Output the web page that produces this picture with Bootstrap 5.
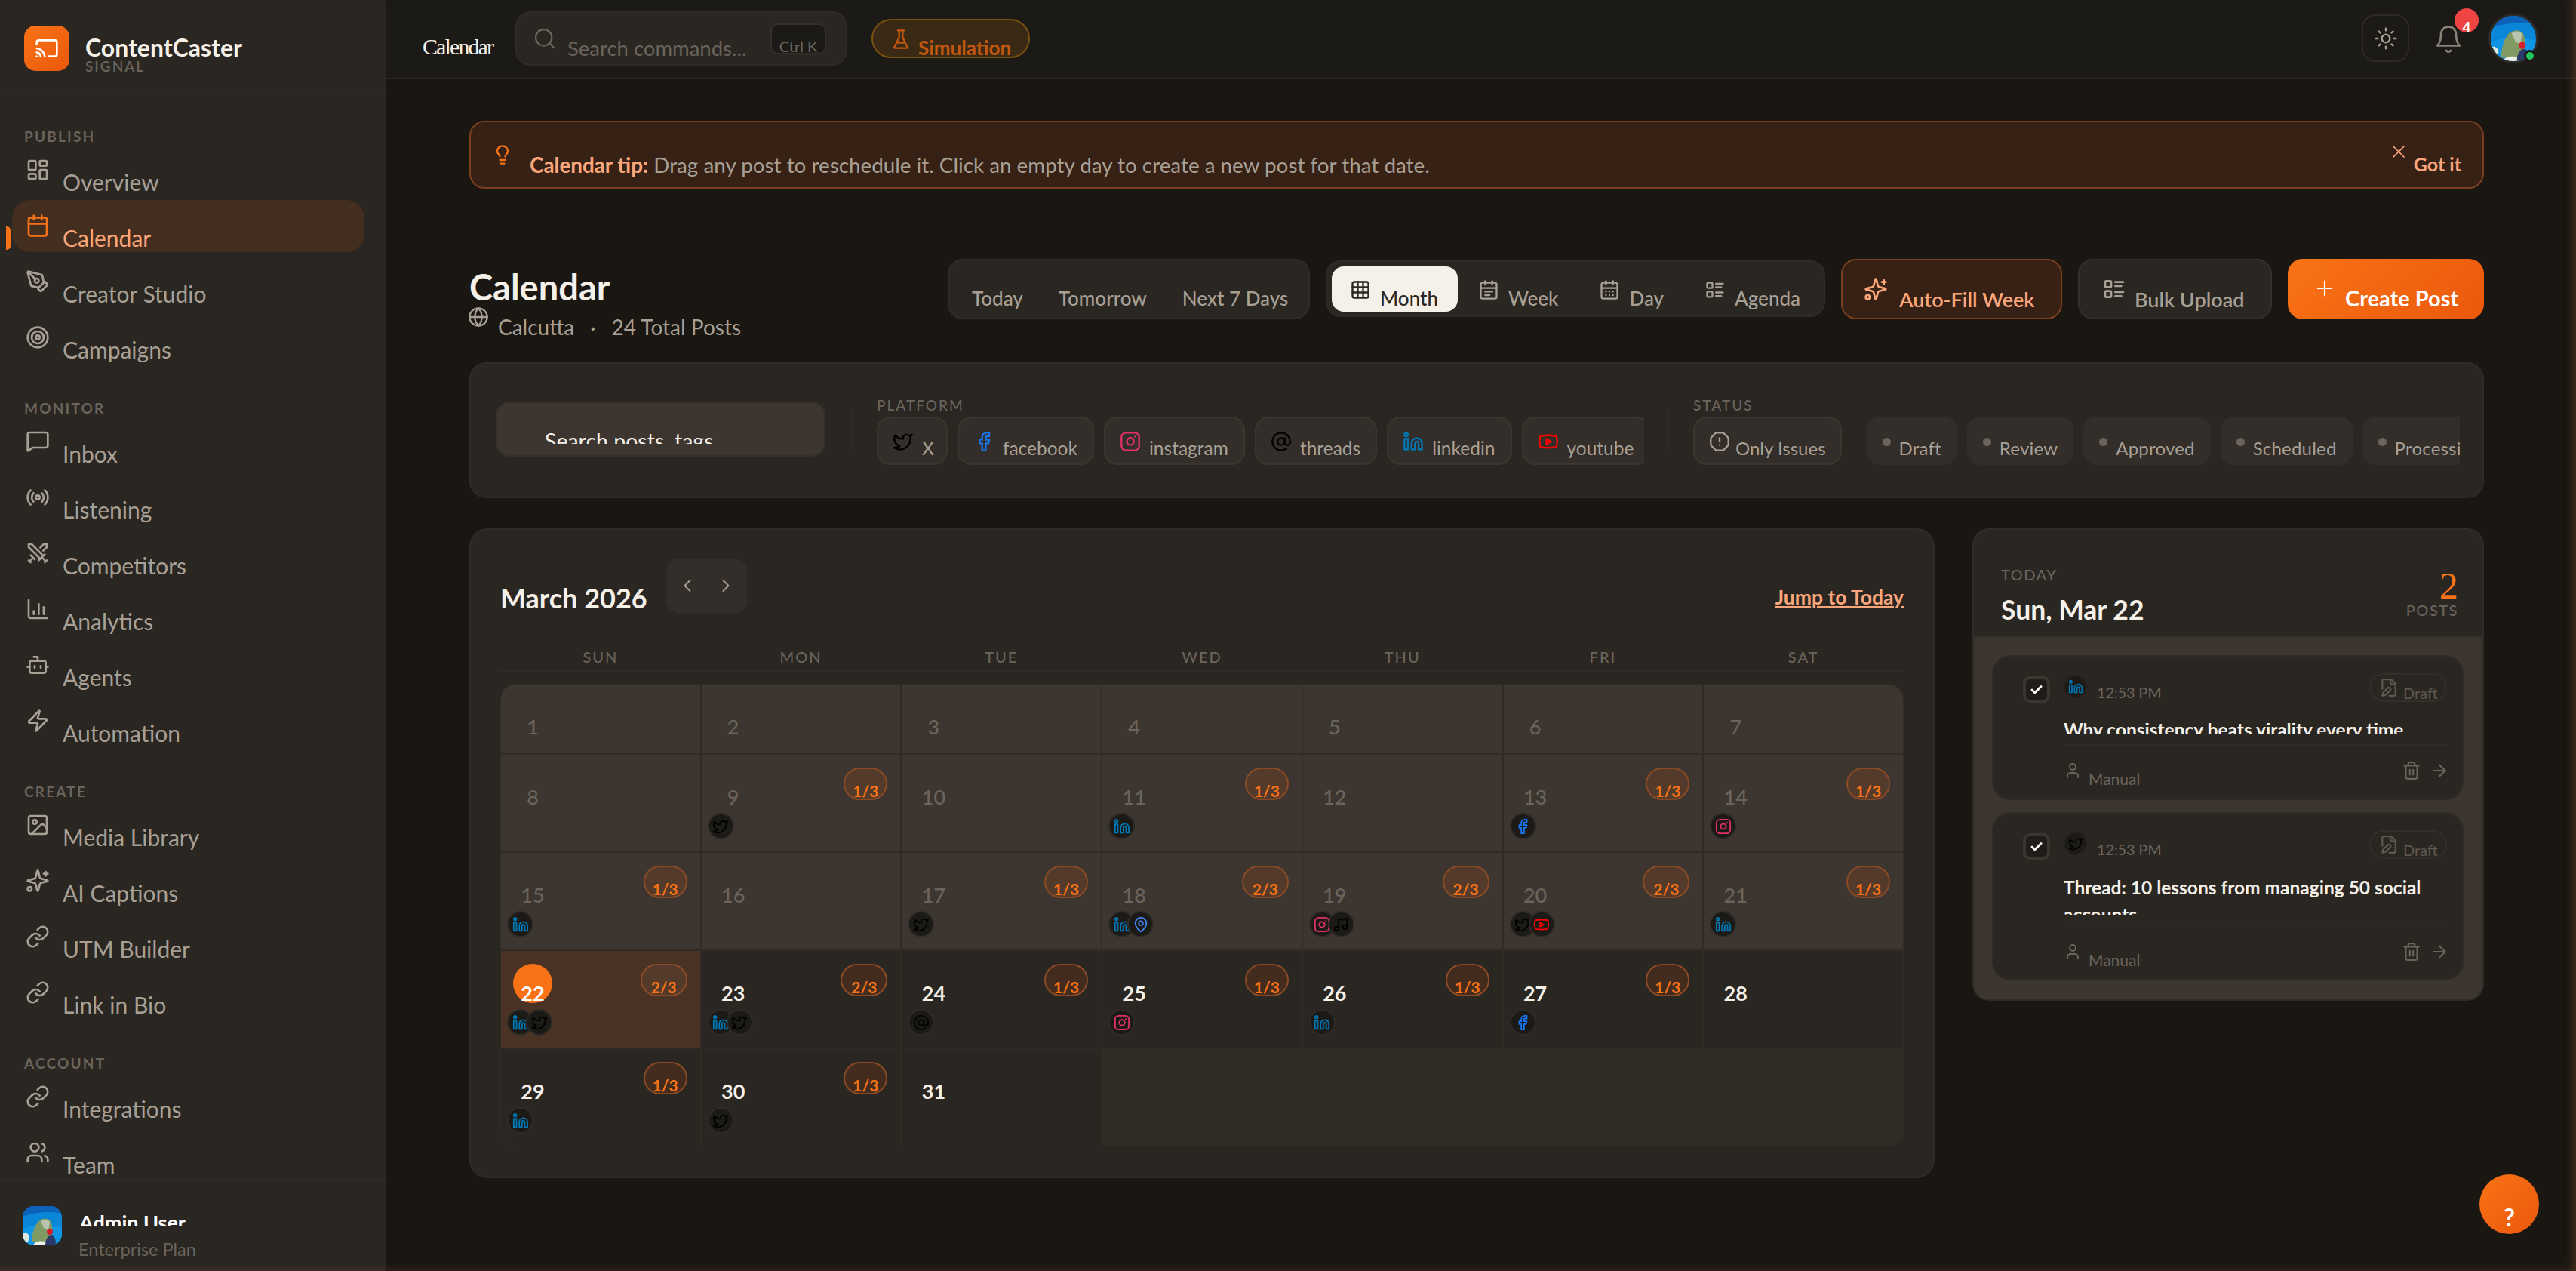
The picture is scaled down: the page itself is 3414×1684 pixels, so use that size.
<!DOCTYPE html>
<html lang="en">
<head>
<meta charset="UTF-8">
<title>ContentCaster - Calendar</title>
<link href="https://cdn.jsdelivr.net/npm/bootstrap@5.3.2/dist/css/bootstrap.min.css" rel="stylesheet">
<style>
  :root { --cc-bg:#1a1612; --cc-top:#1c1a17; --cc-panel:#2a2622; --cc-raise:#332e29; --cc-well:#3d3630; --cc-line:#35302b; --cc-bright:#f5f0e8; --cc-muted:#a8a095; --cc-dim:#6b645c; --cc-orange:#f97316; --cc-peach:#fda67a; --cc-tipbg:#372115; --cc-tipline:#7a3f1e; }
  html, body { height:100%; }
  body { margin:0; overflow:hidden; background:var(--cc-bg); color:var(--cc-bright); font-family:"Lato","Liberation Sans",sans-serif; font-size:26px; }
  body::after { content:""; position:fixed; inset:0; pointer-events:none; box-shadow:inset -10px -6px 14px -8px rgba(125,75,45,.55); }
  svg.ico { fill:none; stroke:currentColor; stroke-width:2; stroke-linecap:round; stroke-linejoin:round; flex:none; display:block; }
  .s18 { width:18px; height:18px; } .s20 { width:20px; height:20px; } .s22 { width:22px; height:22px; } .s24 { width:24px; height:24px; } .s26 { width:26px; height:26px; } .s28 { width:28px; height:28px; } .s32 { width:32px; height:32px; }
  .col-fill { min-width:0; }

  /* sidebar */
  .side-rail { width:512px; flex:none; background:var(--cc-panel); height:100vh; }
  .brand-head { height:124px; padding:34px 0 0 32px; border-bottom:1px solid #2f2b27; gap:21px; }
  .brand-logo { width:60px; height:60px; border-radius:15px; background:linear-gradient(135deg,#f97316,#ea580c); color:#fff; }
  .brand-name { font-size:32px; font-weight:700; line-height:36px; margin-top:11px; color:var(--cc-bright); }
  .brand-sub { font-size:19px; font-weight:600; line-height:20px; letter-spacing:2px; color:var(--cc-dim); margin-top:-3px; }
  .rail-scroll { overflow:hidden; flex:1 1 0; min-height:0; }
  .rail-label { height:21px; line-height:21px; font-size:19px; font-weight:700; letter-spacing:2.2px; color:var(--cc-dim); padding-left:32px; margin-top:48px; }
  .rail-scroll > .rail-label:first-child { margin-top:46px; }
  .rail-item { position:relative; display:flex; align-items:flex-start; height:69px; margin:0 0 5px 16px; width:467px; padding-left:18px; border-radius:24px; color:var(--cc-muted); text-decoration:none; }
  .rail-item svg { margin-top:18px; }
  .rail-item span { margin-left:17px; margin-top:32px; font-size:30px; line-height:36px; }
  .rail-item.is-on { background:#442e20; color:var(--cc-peach); }
  .rail-item.is-on svg { color:var(--cc-orange); }
  .rail-item.is-on::before { content:""; position:absolute; left:-8px; top:35px; width:6px; height:31px; background:var(--cc-orange); border-radius:0 5px 5px 0; }
  .rail-foot { height:122px; flex:none; border-top:1px solid #332e29; padding:35px 0 0 30px; gap:23px; }
  .foot-ava { width:52px; height:52px; border-radius:15px; overflow:hidden; flex:none; }
  .foot-name-clip { height:27px; overflow:hidden; }
  .foot-name { font-size:27px; font-weight:700; line-height:34px; margin-top:5px; color:#fff; }
  .foot-plan { font-size:23.5px; line-height:30px; margin-top:15px; margin-left:-1px; color:var(--cc-dim); }

  /* topbar */
  .top-strip { height:105px; flex:none; background:var(--cc-top); border-bottom:2px solid #2e2b27; padding:0 50px 0 48px; }
  .top-title { font-family:"Liberation Serif",serif; font-size:30px; letter-spacing:-1.9px; line-height:36px; margin-top:44px; width:91px; color:var(--cc-bright); white-space:nowrap; }
  .cmd-box { width:440px; height:72px; margin:15px 0 0 32px; padding-left:21px; background:var(--cc-panel); border:2px solid #2f2b27; border-radius:20px; }
  .cmd-box svg { margin-top:18px; color:var(--cc-dim); stroke-width:1.7; }
  .cmd-hint { margin:30px 0 0 14px; font-size:27.5px; line-height:34px; color:var(--cc-dim); white-space:nowrap; }
  .cmd-key { width:74px; height:41px; margin:14px 26px 0 auto; background:var(--cc-top); border:2px solid var(--cc-line); border-radius:10px; color:var(--cc-dim); font-size:20px; line-height:24px; text-align:center; padding-top:16px; overflow:hidden; white-space:nowrap; }
  .sim-pill { width:210px; height:52px; margin:25px 0 0 32px; padding-left:23px; background:#3a2a15; border:2px solid #7a5010; border-radius:26px; color:#c2570f; font-size:26px; font-weight:700; }
  .sim-pill svg { margin-top:11px; }
  .sim-pill span { margin:20px 0 0 9px; line-height:32px; }
  .round-tool { width:63px; height:63px; margin-top:19px; border:2px solid #2e2b27; border-radius:18px; color:var(--cc-muted); background:transparent; }
  .round-tool svg { stroke-width:1.8; }
  .bell-wrap { position:relative; width:40px; height:40px; margin:32px 0 0 32px; color:#8a8379; }
  .bell-wrap svg { width:40px; height:40px; stroke-width:1.6; }
  .bell-num { position:absolute; left:28px; top:-21px; width:32px; height:32px; border-radius:50%; background:#ef4444; color:#fff; font-size:19px; font-weight:700; text-align:center; line-height:24px; padding-top:13px; overflow:hidden; }
  .me-ava { position:relative; width:66px; height:66px; margin:18px 0 0 33px; }
  .me-ava-img { width:66px; height:66px; border-radius:50%; border:3px solid #2e2b27; overflow:hidden; }
  .me-dot { position:absolute; right:3px; bottom:2px; width:16px; height:16px; border-radius:50%; background:#22c55e; border:3px solid #1c1a17; }

  /* tip */
  .page-body { padding:55px 122px 0 110px; flex:1 1 0; min-height:0; position:relative; }
  .tip-bar { height:90px; padding:0 28px 0 28px; background:var(--cc-tipbg); border:2px solid var(--cc-tipline); border-radius:20px; }
  .tip-bar > svg { margin-top:29px; color:var(--cc-orange); }
  .tip-text { margin:40px 0 0 22px; font-size:27.8px; line-height:34px; color:var(--cc-muted); }
  .tip-text b { color:var(--cc-peach); font-weight:700; }
  .tip-close { margin:25px 0 0 auto; color:var(--cc-peach); font-size:25px; font-weight:700; }
  .tip-close svg { stroke-width:1.5; }
  .tip-close span { margin:15px 0 0 6px; line-height:30px; }

  /* page header */
  .head-row { margin-top:93px; height:80px; gap:21px; }
  .page-h { font-size:47px; font-weight:700; line-height:52px; margin:11px 0 0; color:var(--cc-bright); }
  .page-sub { margin-top:-1px; color:var(--cc-muted); font-size:28px; gap:14px; }
  .page-sub svg { margin:1px -2px 0 -2px; }
  .page-sub span { margin-top:12px; line-height:32px; }
  .page-sub .sep { margin:12px 7px 0; }
  .seg-box { background:var(--cc-panel); border:2px solid #2f2b27; }
  .quick-seg { width:480px; height:80px; border-radius:20px; padding-left:30px; gap:47px; font-size:26px; font-weight:500; color:var(--cc-muted); }
  .quick-seg span { margin-top:34px; line-height:32px; }
  .view-seg { width:662px; height:75px; margin-top:2px; border-radius:20px; padding:6px 0 0 6px; gap:0; }
  .view-tab { height:60px; padding:0 27px 0 27px; border-radius:16px; color:var(--cc-muted); font-size:26px; font-weight:500; }
  .view-tab svg { margin-top:17px; }
  .view-tab span { margin:26px 0 0 12px; line-height:32px; }
  .view-tab.is-on { width:167px; padding:0 0 0 24px; background:var(--cc-bright); color:#2a2622; }
  .tool-btn.btn { display:flex; align-items:flex-start; height:80px; padding:28px 0 0 28px; font-size:27px; font-weight:600; border-radius:20px; line-height:34px; font-family:inherit; }
  .tool-btn svg { margin-top:-6px; }
  .tool-btn span { margin:7px 0 0 15px; }
  .tool-fill { width:293px; background:var(--cc-tipbg); border:2px solid var(--cc-tipline); color:var(--cc-peach); }
  .tool-bulk { width:257px; background:var(--cc-panel); border:2px solid var(--cc-line); color:var(--cc-muted); }
  .tool-btn.tool-bulk { padding-left:30px; }
  .tool-btn.tool-bulk span { margin-left:11px; }
  .tool-make { width:260px; background:linear-gradient(135deg,#f97316,#ea580c); border:0; color:#fff; }
  .tool-btn.tool-make { font-size:29px; font-weight:700; padding-left:32px; }
  .tool-make svg { margin:-5px 0 0 1px; stroke-width:1.6; }
  .tool-btn.tool-make span { margin-left:11px; }

  /* filters */
  .filter-card { height:180px; margin-top:57px; padding:44px 0 0 33px; background:var(--cc-panel); border:2px solid #2f2b27; border-radius:22px; }
  .find-well { width:437px; height:73px; margin-top:6px; padding:28px 0 0 63px; background:var(--cc-well); border:2px solid var(--cc-line); border-radius:18px; flex:none; }
  .find-clip { height:26px; overflow:hidden; font-size:28.5px; line-height:34px; color:var(--cc-bright); white-space:nowrap; }
  .find-clip div { margin-top:5px; }
  .v-rule { width:1px; height:56px; background:var(--cc-line); flex:none; margin-top:14px; }
  .v-rule.first-rule { margin-left:35px; }
  .grp-label { font-size:19px; line-height:21px; font-weight:500; letter-spacing:2px; color:var(--cc-dim); height:26px; }
  .chip-run { gap:13px; overflow:hidden; }
  .plat-grp { width:1017px; margin:0 32px; flex:none; }
  .stat-grp { width:1016px; margin-left:32px; flex:none; }
  .f-chip { height:64px; flex:none; padding:17px 20px 0 19px; background:var(--cc-raise); border:2px solid var(--cc-well); border-radius:18px; color:var(--cc-muted); font-size:24.5px; white-space:nowrap; gap:11px; }
  .f-chip:first-child { padding-right:16px; }
  .f-chip span { margin-top:8px; line-height:30px; }
  .f-chip.issue-chip { margin-right:20px; font-size:24px; gap:7px; padding-right:19px; }
  .f-chip.soft { border-color:var(--cc-raise); padding:26px 19px 0 19px; gap:11px; font-size:24px; letter-spacing:.2px; }
  .f-chip.soft i { width:11px; height:11px; border-radius:50%; background:var(--cc-dim); display:block; flex:none; }
  .f-chip.soft span { margin-top:-1px; }
  .ic-tw { color:#000; } .ic-fb { color:#1877f2; } .ic-ig { color:#e1306c; } .ic-th { color:#000; } .ic-li { color:#0077b5; } .ic-yt { color:#f00; } .ic-tk { color:#000; } .ic-pin { color:#4285f4; }

  /* calendar */
  .split-row { margin-top:40px; gap:50px; align-items:flex-start; }
  .month-card { width:1942px; flex:none; height:861px; padding:38px 39px 0; background:var(--cc-panel); border:2px solid #2f2b27; border-radius:24px; }
  .month-h { font-size:36px; font-weight:700; line-height:44px; margin:0; padding-top:30px; color:var(--cc-bright); width:220px; }
  .month-nav { width:107px; height:72px; background:var(--cc-raise); border-radius:16px; color:var(--cc-muted); padding:0 14px; }
  .month-nav svg { stroke-width:1.6; }
  .jump-link { margin-left:auto; color:var(--cc-peach); font-size:26.5px; font-weight:700; padding-top:36px; line-height:30px; text-decoration:underline; }
  .week-head { display:grid; grid-template-columns:repeat(7,1fr); margin-top:43px; height:33px; border-bottom:2px solid #2f2b27; }
  .week-head div { text-align:center; font-size:20px; line-height:26px; letter-spacing:2px; color:var(--cc-dim); font-weight:500; }
  .day-grid { display:grid; grid-template-columns:repeat(7,1fr); gap:2px; margin-top:16px; background:#302b25; border:1px solid #2f2b27; border-radius:20px; overflow:hidden; }
  .day-cell { position:relative; min-height:91px; padding:17px 0 16px 8px; background:#2a2622; }
  .day-cell.is-past { background:var(--cc-well); }
  .day-cell.is-today { background:#4a3324; }
  .day-cell.is-blank { background:transparent; }
  .day-num { width:52px; height:52px; margin-left:8px; display:flex; align-items:flex-end; justify-content:center; font-size:27px; line-height:27px; font-weight:700; color:var(--cc-bright); }
  .is-past .day-num { color:var(--cc-dim); font-weight:500; }
  .is-today .day-num { background:var(--cc-orange); border-radius:50%; color:#fff; font-weight:700; }
  .load-tag { position:absolute; top:17px; right:17px; width:58px; height:43px; border:2px solid #8a4a25; border-radius:22px; background:#432c1e; color:var(--cc-orange); font-size:21px; font-weight:700; line-height:24px; text-align:center; padding-top:17px; overflow:hidden; }
  .load-tag.wide { width:62px; }
  .is-past .load-tag, .is-today .load-tag { background:#543a2a; }
  .dot-run { margin-top:8px; }
  .plat-dot { width:35px; height:35px; border-radius:50%; background:var(--cc-top); border:2px solid #2f2b27; display:flex; align-items:center; justify-content:center; }
  .plat-dot + .plat-dot { margin-left:-10px; position:relative; }

  /* today panel */
  .today-card { flex:1 1 0; height:626px; background:var(--cc-well); border:2px solid #2f2b27; border-radius:22px; overflow:hidden; }
  .today-head { height:142px; background:var(--cc-panel); padding:49px 32px 0 36px; border-bottom:2px solid #2f2b27; }
  .tiny-cap { font-size:20px; line-height:20px; letter-spacing:1.5px; color:var(--cc-dim); font-weight:500; }
  .today-date { font-size:35.5px; line-height:44px; font-weight:700; margin-top:15px; color:var(--cc-bright); }
  .today-count { text-align:right; margin-top:7px; }
  .today-num { font-family:"Liberation Serif",serif; font-size:50px; line-height:36px; color:var(--cc-orange); }
  .queue-wrap { padding:24px 25px 0 24px; gap:16px; }
  .post-box { padding:24px 20px 0 39px; background:var(--cc-panel); border:2px solid #2f2b27; border-radius:24px; gap:18px; }
  .post-one { height:192px; } .post-two { height:223px; }
  .tick-box { width:36px; height:35px; flex:none; margin-top:2px; background:#1f1c19; border:4px solid var(--cc-well); border-radius:9px; color:#fff; display:flex; align-items:center; justify-content:center; }
  .tick-box svg { stroke-width:4; }
  .post-meta { height:38px; }
  .post-meta .plat-dot { width:31px; height:31px; border-color:#24211d; }
  .post-time { margin:10px 0 0 13px; font-size:20px; letter-spacing:-.2px; line-height:26px; color:var(--cc-dim); }
  .draft-tag { margin-left:auto; width:103px; height:38px; border:2px solid #332e29; border-radius:20px; padding:4px 0 0 11px; color:#5f584f; font-size:20px; gap:6px; margin-top:-2px; }
  .draft-tag span { margin-top:8px; line-height:24px; }
  .post-title-clip { overflow:hidden; font-size:24.5px; line-height:36px; font-weight:700; color:var(--cc-bright); }
  .post-title-clip div { margin-top:-8px; }
  .post-one .post-title-clip { height:14px; margin-top:26px; }
  .post-one .post-title-clip div { margin-top:-9px; }
  .post-two .post-title-clip { height:46px; margin-top:26px; }
  .post-foot { border-top:2px solid #2f2b27; margin-top:14px; padding-top:21px; color:var(--cc-dim); font-size:21px; }
  .post-two .post-foot { margin-top:12px; padding-top:23px; }
  .post-foot span { margin:10px 0 0 9px; line-height:26px; }
  .post-foot .acts { margin:-1px -3px 0 auto; gap:11px; }

  .help-fab { position:absolute; right:49px; bottom:49px; width:79px; height:79px; border-radius:50%; background:linear-gradient(135deg,#f97316,#ea580c); color:#fff; font-size:32px; font-weight:700; text-align:center; padding-top:39px; line-height:36px; }
</style>
</head>
<body class="d-flex">

<svg width="0" height="0" class="position-absolute">
  <symbol id="i-cast" viewBox="0 0 24 24"><path d="M2 8V6a2 2 0 0 1 2-2h16a2 2 0 0 1 2 2v12a2 2 0 0 1-2 2h-6"/><path d="M2 12a9 9 0 0 1 8 8"/><path d="M2 16a5 5 0 0 1 4 4"/><path d="M2 20h.01"/></symbol>
  <symbol id="i-dash" viewBox="0 0 24 24"><rect x="3" y="3" width="7" height="9" rx="1"/><rect x="14" y="3" width="7" height="5" rx="1"/><rect x="14" y="12" width="7" height="9" rx="1"/><rect x="3" y="16" width="7" height="5" rx="1"/></symbol>
  <symbol id="i-cal" viewBox="0 0 24 24"><path d="M8 2v4"/><path d="M16 2v4"/><rect x="3" y="4" width="18" height="18" rx="2"/><path d="M3 10h18"/></symbol>
  <symbol id="i-pen" viewBox="0 0 24 24"><path d="M15.707 21.293a1 1 0 0 1-1.414 0l-1.586-1.586a1 1 0 0 1 0-1.414l5.586-5.586a1 1 0 0 1 1.414 0l1.586 1.586a1 1 0 0 1 0 1.414z"/><path d="m18 13-1.375-6.874a1 1 0 0 0-.746-.776L3.235 2.028a1 1 0 0 0-1.207 1.207L5.35 15.879a1 1 0 0 0 .776.746L13 18"/><path d="m2.3 2.3 7.286 7.286"/><circle cx="11" cy="11" r="2"/></symbol>
  <symbol id="i-target" viewBox="0 0 24 24"><circle cx="12" cy="12" r="10"/><circle cx="12" cy="12" r="6"/><circle cx="12" cy="12" r="2"/></symbol>
  <symbol id="i-msg" viewBox="0 0 24 24"><path d="M2 20V5a2 2 0 0 1 2-2h16a2 2 0 0 1 2 2v11a2 2 0 0 1-2 2H7.5a2 2 0 0 0-1.3.5L3 21a.6.6 0 0 1-1-1z"/></symbol>
  <symbol id="i-radio" viewBox="0 0 24 24"><path d="M4.9 19.1C1 15.2 1 8.8 4.9 4.9"/><path d="M7.8 16.2c-2.3-2.3-2.3-6.1 0-8.5"/><circle cx="12" cy="12" r="2"/><path d="M16.2 7.8c2.3 2.3 2.3 6.1 0 8.5"/><path d="M19.1 4.9C23 8.8 23 15.1 19.1 19"/></symbol>
  <symbol id="i-swords" viewBox="0 0 24 24"><polyline points="14.5 17.5 3 6 3 3 6 3 17.5 14.5"/><line x1="13" x2="19" y1="19" y2="13"/><line x1="16" x2="20" y1="16" y2="20"/><line x1="19" x2="21" y1="21" y2="19"/><polyline points="14.5 6.5 18 3 21 3 21 6 17.5 9.5"/><line x1="5" x2="9" y1="14" y2="18"/><line x1="7" x2="4" y1="17" y2="20"/><line x1="3" x2="5" y1="19" y2="21"/></symbol>
  <symbol id="i-chart" viewBox="0 0 24 24"><path d="M3 3v16a2 2 0 0 0 2 2h16"/><path d="M18 17v-7"/><path d="M13 17V7"/><path d="M8 17v-3"/></symbol>
  <symbol id="i-bot" viewBox="0 0 24 24"><path d="M12 8V4H8"/><rect x="4" y="8" width="16" height="12" rx="2"/><path d="M2 14h2"/><path d="M20 14h2"/><path d="M15 13v2"/><path d="M9 13v2"/></symbol>
  <symbol id="i-zap" viewBox="0 0 24 24"><path d="M4 14a1 1 0 0 1-.78-1.63l9.9-10.2a.5.5 0 0 1 .86.46l-1.92 6.02A1 1 0 0 0 13 10h7a1 1 0 0 1 .78 1.63l-9.9 10.2a.5.5 0 0 1-.86-.46l1.92-6.02A1 1 0 0 0 11 14z"/></symbol>
  <symbol id="i-img" viewBox="0 0 24 24"><rect x="3" y="3" width="18" height="18" rx="2"/><circle cx="9" cy="9" r="2"/><path d="m21 15-3.086-3.086a2 2 0 0 0-2.828 0L6 21"/></symbol>
  <symbol id="i-spark" viewBox="0 0 24 24"><path d="M9.937 15.5A2 2 0 0 0 8.5 14.063l-6.135-1.582a.5.5 0 0 1 0-.962L8.5 9.936A2 2 0 0 0 9.937 8.5l1.582-6.135a.5.5 0 0 1 .963 0L14.063 8.5A2 2 0 0 0 15.5 9.937l6.135 1.581a.5.5 0 0 1 0 .964L15.5 14.063a2 2 0 0 0-1.437 1.437l-1.582 6.135a.5.5 0 0 1-.963 0z"/><path d="M20 3v4"/><path d="M22 5h-4"/><circle cx="4" cy="20" r="2"/></symbol>
  <symbol id="i-link" viewBox="0 0 24 24"><path d="M10 13a5 5 0 0 0 7.54.54l3-3a5 5 0 0 0-7.07-7.07l-1.72 1.71"/><path d="M14 11a5 5 0 0 0-7.54-.54l-3 3a5 5 0 0 0 7.07 7.07l1.71-1.71"/></symbol>
  <symbol id="i-users" viewBox="0 0 24 24"><path d="M16 21v-2a4 4 0 0 0-4-4H6a4 4 0 0 0-4 4v2"/><circle cx="9" cy="7" r="4"/><path d="M22 21v-2a4 4 0 0 0-3-3.87"/><path d="M16 3.13a4 4 0 0 1 0 7.75"/></symbol>
  <symbol id="i-search" viewBox="0 0 24 24"><circle cx="11" cy="11" r="8"/><path d="m21 21-4.3-4.3"/></symbol>
  <symbol id="i-flask" viewBox="0 0 24 24"><path d="M10 2v7.527a2 2 0 0 1-.211.896L4.72 20.55a1 1 0 0 0 .9 1.45h12.76a1 1 0 0 0 .9-1.45l-5.069-10.127A2 2 0 0 1 14 9.527V2"/><path d="M8.5 2h7"/><path d="M7 16h10"/></symbol>
  <symbol id="i-sun" viewBox="0 0 24 24"><circle cx="12" cy="12" r="4"/><path d="M12 2v2"/><path d="M12 20v2"/><path d="m4.93 4.93 1.41 1.41"/><path d="m17.66 17.66 1.41 1.41"/><path d="M2 12h2"/><path d="M20 12h2"/><path d="m6.34 17.66-1.41 1.41"/><path d="m19.07 4.93-1.41 1.41"/></symbol>
  <symbol id="i-bell" viewBox="0 0 24 24"><path d="M6 8a6 6 0 0 1 12 0c0 7 3 9 3 9H3s3-2 3-9"/><path d="M10.3 21a1.94 1.94 0 0 0 3.4 0"/></symbol>
  <symbol id="i-bulb" viewBox="0 0 24 24"><path d="M15 14c.2-1 .7-1.7 1.5-2.5 1-.9 1.5-2.2 1.5-3.5A6 6 0 0 0 6 8c0 1 .2 2.2 1.5 3.5.7.7 1.3 1.5 1.5 2.5"/><path d="M9 18h6"/><path d="M10 22h4"/></symbol>
  <symbol id="i-x" viewBox="0 0 24 24"><path d="M18 6 6 18"/><path d="m6 6 12 12"/></symbol>
  <symbol id="i-globe" viewBox="0 0 24 24"><circle cx="12" cy="12" r="10"/><path d="M12 2a14.5 14.5 0 0 0 0 20 14.5 14.5 0 0 0 0-20"/><path d="M2 12h20"/></symbol>
  <symbol id="i-table" viewBox="0 0 24 24"><rect x="3" y="3" width="18" height="18" rx="2"/><path d="M3 9h18"/><path d="M3 15h18"/><path d="M9 3v18"/><path d="M15 3v18"/></symbol>
  <symbol id="i-week" viewBox="0 0 24 24"><path d="M8 2v4"/><path d="M16 2v4"/><rect x="3" y="4" width="18" height="18" rx="2"/><path d="M3 10h18"/><path d="M8 14h8"/><path d="M8 18h5"/></symbol>
  <symbol id="i-day" viewBox="0 0 24 24"><path d="M8 2v4"/><path d="M16 2v4"/><rect x="3" y="4" width="18" height="18" rx="2"/><path d="M3 10h18"/><path d="M8 14h.01"/><path d="M12 14h.01"/><path d="M16 14h.01"/><path d="M8 18h.01"/><path d="M12 18h.01"/><path d="M16 18h.01"/></symbol>
  <symbol id="i-list" viewBox="0 0 24 24"><rect x="3" y="4" width="6" height="6" rx="1"/><rect x="3" y="14" width="6" height="6" rx="1"/><path d="M13 5h8"/><path d="M13 9h6"/><path d="M13 15h8"/><path d="M13 19h6"/></symbol>
  <symbol id="i-plus" viewBox="0 0 24 24"><path d="M5 12h14"/><path d="M12 5v14"/></symbol>
  <symbol id="i-left" viewBox="0 0 24 24"><path d="m15 18-6-6 6-6"/></symbol>
  <symbol id="i-right" viewBox="0 0 24 24"><path d="m9 18 6-6-6-6"/></symbol>
  <symbol id="i-tw" viewBox="0 0 24 24"><path d="M22 4s-.7 2.1-2 3.4c1.6 10-9.4 17.3-18 11.6 2.2.1 4.4-.6 6-2C3 15.5.5 9.6 3 5c2.2 2.6 5.6 4.1 9 4-.9-4.2 4-6.6 7-3.8 1.1 0 3-1.2 3-1.2z"/></symbol>
  <symbol id="i-fb" viewBox="0 0 24 24"><path d="M18 2h-3a5 5 0 0 0-5 5v3H7v4h3v8h4v-8h3l1-4h-4V7a1 1 0 0 1 1-1h3z"/></symbol>
  <symbol id="i-ig" viewBox="0 0 24 24"><rect x="2" y="2" width="20" height="20" rx="5"/><path d="M16 11.37A4 4 0 1 1 12.63 8 4 4 0 0 1 16 11.37z"/><path d="M17.5 6.5h.01"/></symbol>
  <symbol id="i-th" viewBox="0 0 24 24"><circle cx="12" cy="12" r="4"/><path d="M16 8v5a3 3 0 0 0 6 0v-1a10 10 0 1 0-4 8"/></symbol>
  <symbol id="i-li" viewBox="0 0 24 24"><path d="M16 8a6 6 0 0 1 6 6v7h-4v-7a2 2 0 0 0-2-2 2 2 0 0 0-2 2v7h-4v-7a6 6 0 0 1 6-6z"/><rect x="2" y="9" width="4" height="12"/><circle cx="4" cy="4" r="2"/></symbol>
  <symbol id="i-yt" viewBox="0 0 24 24"><path d="M2.5 17a24.12 24.12 0 0 1 0-10 2 2 0 0 1 1.4-1.4 49.56 49.56 0 0 1 16.2 0A2 2 0 0 1 21.5 7a24.12 24.12 0 0 1 0 10 2 2 0 0 1-1.4 1.4 49.55 49.55 0 0 1-16.2 0A2 2 0 0 1 2.5 17"/><path d="m10 15 5-3-5-3z"/></symbol>
  <symbol id="i-tk" viewBox="0 0 24 24"><path d="M9 18V5l12-2v13"/><circle cx="6" cy="18" r="3"/><circle cx="18" cy="16" r="3"/></symbol>
  <symbol id="i-pin" viewBox="0 0 24 24"><path d="M20 10c0 4.993-5.539 10.193-7.399 11.799a1 1 0 0 1-1.202 0C9.539 20.193 4 14.993 4 10a8 8 0 0 1 16 0"/><circle cx="12" cy="10" r="3"/></symbol>
  <symbol id="i-alert" viewBox="0 0 24 24"><path d="M12 16h.01"/><path d="M12 8v4"/><path d="M15.312 2a2 2 0 0 1 1.414.586l4.688 4.688A2 2 0 0 1 22 8.688v6.624a2 2 0 0 1-.586 1.414l-4.688 4.688a2 2 0 0 1-1.414.586H8.688a2 2 0 0 1-1.414-.586l-4.688-4.688A2 2 0 0 1 2 15.312V8.688a2 2 0 0 1 .586-1.414l4.688-4.688A2 2 0 0 1 8.688 2z"/></symbol>
  <symbol id="i-file" viewBox="0 0 24 24"><path d="M12.5 22H18a2 2 0 0 0 2-2V7l-5-5H6a2 2 0 0 0-2 2v9.5"/><path d="M14 2v4a2 2 0 0 0 2 2h4"/><path d="M13.378 15.626a1 1 0 1 0-3.004-3.004l-5.01 5.012a2 2 0 0 0-.506.854l-.837 2.87a.5.5 0 0 0 .62.62l2.87-.837a2 2 0 0 0 .854-.506z"/></symbol>
  <symbol id="i-user" viewBox="0 0 24 24"><path d="M19 21v-2a4 4 0 0 0-4-4H9a4 4 0 0 0-4 4v2"/><circle cx="12" cy="7" r="4"/></symbol>
  <symbol id="i-trash" viewBox="0 0 24 24"><path d="M3 6h18"/><path d="M19 6v14c0 1-1 2-2 2H7c-1 0-2-1-2-2V6"/><path d="M8 6V4c0-1 1-2 2-2h4c1 0 2 1 2 2v2"/><path d="M10 11v6"/><path d="M14 11v6"/></symbol>
  <symbol id="i-arrow" viewBox="0 0 24 24"><path d="M5 12h14"/><path d="m12 5 7 7-7 7"/></symbol>
  <symbol id="i-check" viewBox="0 0 24 24"><path d="M20 6 9 17l-5-5"/></symbol>
  <symbol id="i-photo" viewBox="0 0 52 52">
    <rect width="52" height="52" fill="#0a86d8"/>
    <path d="M0 0h52v10C38 6 14 8 0 14z" fill="#0c62b8"/>
    <path d="M0 30c10-4 30-6 52-2v24H0z" fill="#1196e6"/>
    <path d="M12 48c0-12 4-22 9-28 5-4 12-5 16 0 3 6 3 14 1 20l2 8z" fill="#7f9a62"/>
    <path d="M24 20c4-3 9-3 12 1l-2 12-6-4z" fill="#b9c4ae"/>
    <path d="M0 36c4-2 8 0 9 5l-2 7-7 1z" fill="#dfe6de"/>
    <path d="M14 52c2-6 14-7 20-3v3z" fill="#eef0e8"/>
    <circle cx="36" cy="34" r="4" fill="#d3202c"/>
    <path d="M30 52c0-8 4-14 8-14s6 6 6 14z" fill="#2a3a6a"/>
  </symbol>
</svg>

<aside class="side-rail d-flex flex-column">
  <div class="brand-head d-flex">
    <div class="brand-logo d-flex align-items-center justify-content-center"><svg class="ico s32"><use href="#i-cast"/></svg></div>
    <div>
      <div class="brand-name">ContentCaster</div>
      <div class="brand-sub">SIGNAL</div>
    </div>
  </div>
  <nav class="rail-scroll" id="railNav"></nav>
  <div class="rail-foot d-flex">
    <div class="foot-ava"><svg width="52" height="52"><use href="#i-photo"/></svg></div>
    <div>
      <div class="foot-name-clip"><div class="foot-name">Admin User</div></div>
      <div class="foot-plan">Enterprise Plan</div>
    </div>
  </div>
</aside>

<div class="d-flex flex-column flex-grow-1 col-fill">
  <header class="top-strip d-flex">
    <div class="top-title">Calendar</div>
    <div class="cmd-box d-flex">
      <svg class="ico s32"><use href="#i-search"/></svg>
      <span class="cmd-hint">Search commands...</span>
      <span class="cmd-key">Ctrl K</span>
    </div>
    <div class="sim-pill d-flex">
      <svg class="ico s28"><use href="#i-flask"/></svg>
      <span>Simulation</span>
    </div>
    <div class="d-flex ms-auto">
      <button class="round-tool d-flex align-items-center justify-content-center"><svg class="ico s32"><use href="#i-sun"/></svg></button>
      <div class="bell-wrap"><svg class="ico"><use href="#i-bell"/></svg><span class="bell-num">4</span></div>
      <div class="me-ava">
        <div class="me-ava-img"><svg width="60" height="60"><use href="#i-photo"/></svg></div>
        <span class="me-dot"></span>
      </div>
    </div>
  </header>

  <main class="page-body">
    <div class="tip-bar d-flex">
      <svg class="ico s28"><use href="#i-bulb"/></svg>
      <div class="tip-text"><b>Calendar tip:</b> Drag any post to reschedule it. Click an empty day to create a new post for that date.</div>
      <div class="tip-close d-flex"><svg class="ico s28"><use href="#i-x"/></svg><span>Got it</span></div>
    </div>

    <div class="head-row d-flex">
      <div class="me-auto">
        <h1 class="page-h">Calendar</h1>
        <div class="page-sub d-flex">
          <svg class="ico s28"><use href="#i-globe"/></svg>
          <span>Calcutta</span><span class="sep">·</span><span>24 Total Posts</span>
        </div>
      </div>
      <div class="seg-box quick-seg d-flex"><span>Today</span><span>Tomorrow</span><span>Next 7 Days</span></div>
      <div class="seg-box view-seg d-flex">
        <div class="view-tab is-on d-flex"><svg class="ico s28"><use href="#i-table"/></svg><span>Month</span></div>
        <div class="view-tab d-flex"><svg class="ico s28"><use href="#i-week"/></svg><span>Week</span></div>
        <div class="view-tab d-flex"><svg class="ico s28"><use href="#i-day"/></svg><span>Day</span></div>
        <div class="view-tab d-flex"><svg class="ico s28"><use href="#i-list"/></svg><span>Agenda</span></div>
      </div>
      <button class="btn tool-btn tool-fill"><svg class="ico s32"><use href="#i-spark"/></svg><span>Auto-Fill Week</span></button>
      <button class="btn tool-btn tool-bulk"><svg class="ico s32"><use href="#i-list"/></svg><span>Bulk Upload</span></button>
      <button class="btn tool-btn tool-make"><svg class="ico s32"><use href="#i-plus"/></svg><span>Create Post</span></button>
    </div>

    <section class="filter-card d-flex">
      <div class="find-well"><div class="find-clip"><div>Search posts, tags</div></div></div>
      <div class="v-rule first-rule"></div>
      <div class="plat-grp">
        <div class="grp-label">PLATFORM</div>
        <div class="chip-run d-flex" id="platChips"></div>
      </div>
      <div class="v-rule"></div>
      <div class="stat-grp">
        <div class="grp-label">STATUS</div>
        <div class="chip-run d-flex" id="statChips"></div>
      </div>
    </section>

    <div class="split-row d-flex">
      <section class="month-card">
        <div class="d-flex">
          <h2 class="month-h">March 2026</h2>
          <div class="month-nav d-flex align-items-center justify-content-between"><svg class="ico s28"><use href="#i-left"/></svg><svg class="ico s28"><use href="#i-right"/></svg></div>
          <a class="jump-link" href="#">Jump to Today</a>
        </div>
        <div class="week-head"><div>SUN</div><div>MON</div><div>TUE</div><div>WED</div><div>THU</div><div>FRI</div><div>SAT</div></div>
        <div class="day-grid" id="dayGrid"></div>
      </section>

      <aside class="today-card">
        <div class="today-head d-flex justify-content-between">
          <div>
            <div class="tiny-cap">TODAY</div>
            <div class="today-date">Sun, Mar 22</div>
          </div>
          <div class="today-count">
            <div class="today-num">2</div>
            <div class="tiny-cap mt-1">POSTS</div>
          </div>
        </div>
        <div class="queue-wrap d-flex flex-column" id="postQueue"></div>
      </aside>
    </div>

    <div class="help-fab">?</div>
  </main>
</div>

<script>
  function ic(nome, tam, cor) {
    return `<svg class="ico ${tam} ${cor || ''}"><use href="#i-${nome}"/></svg>`;
  }

  // sidebar
  const menu = [
    ["PUBLISH", [["dash","Overview"],["cal","Calendar",1],["pen","Creator Studio"],["target","Campaigns"]]],
    ["MONITOR", [["msg","Inbox"],["radio","Listening"],["swords","Competitors"],["chart","Analytics"],["bot","Agents"],["zap","Automation"]]],
    ["CREATE", [["img","Media Library"],["spark","AI Captions"],["link","UTM Builder"],["link","Link in Bio"]]],
    ["ACCOUNT", [["link","Integrations"],["users","Team"]]]
  ];
  document.getElementById("railNav").innerHTML = menu.map(s =>
    `<div class="rail-label">${s[0]}</div>` + s[1].map(i =>
      `<a class="rail-item ${i[2] ? 'is-on' : ''}" href="#">${ic(i[0],'s32')}<span>${i[1]}</span></a>`).join("")
  ).join("");

  // filters
  const plats = [["tw","X"],["fb","facebook"],["ig","instagram"],["th","threads"],["li","linkedin"],["yt","youtube"]];
  document.getElementById("platChips").innerHTML = plats.map(p =>
    `<div class="f-chip d-flex">${ic(p[0],'s28','ic-'+p[0])}<span>${p[1]}</span></div>`).join("");
  document.getElementById("statChips").innerHTML =
    `<div class="f-chip issue-chip d-flex">${ic('alert','s28')}<span>Only Issues</span></div>` +
    ["Draft","Review","Approved","Scheduled","Processing"].map(t =>
      `<div class="f-chip soft d-flex"><i></i><span>${t}</span></div>`).join("");

  // calendar
  const posts = {9:["1/3","tw"],11:["1/3","li"],13:["1/3","fb"],14:["1/3","ig"],15:["1/3","li"],17:["1/3","tw"],18:["2/3","li","pin"],19:["2/3","ig","tk"],20:["2/3","tw","yt"],21:["1/3","li"],22:["2/3","li","tw"],23:["2/3","li","tw"],24:["1/3","th"],25:["1/3","ig"],26:["1/3","li"],27:["1/3","fb"],29:["1/3","li"],30:["1/3","tw"]};
  let html = "";
  for (let d = 1; d <= 35; d++) {
    if (d > 31) { html += `<div class="day-cell is-blank"></div>`; continue; }
    const p = posts[d];
    const cls = d < 22 ? "is-past" : (d == 22 ? "is-today" : "");
    html += `<div class="day-cell ${cls}"><div class="day-num">${d}</div>`;
    if (p) {
      html += `<div class="load-tag ${p[0] == '2/3' ? 'wide' : ''}">${p[0]}</div><div class="dot-run d-flex">` +
        p.slice(1).map(n => `<span class="plat-dot">${ic(n,'s22','ic-'+n)}</span>`).join("") + `</div>`;
    }
    html += `</div>`;
  }
  document.getElementById("dayGrid").innerHTML = html;

  // today list
  const fila = [["li","Why consistency beats virality every time","post-one"],["tw","Thread: 10 lessons from managing 50 social accounts","post-two"]];
  document.getElementById("postQueue").innerHTML = fila.map(f => `
    <div class="post-box d-flex ${f[2]}">
      <div class="tick-box">${ic('check','s18')}</div>
      <div class="flex-grow-1 col-fill">
        <div class="post-meta d-flex">
          <span class="plat-dot">${ic(f[0],'s20','ic-'+f[0])}</span>
          <span class="post-time">12:53 PM</span>
          <div class="draft-tag d-flex">${ic('file','s26')}<span>Draft</span></div>
        </div>
        <div class="post-title-clip"><div>${f[1]}</div></div>
        <div class="post-foot d-flex">
          ${ic('user','s24')}<span>Manual</span>
          <div class="acts d-flex">${ic('trash','s26')}${ic('arrow','s26')}</div>
        </div>
      </div>
    </div>`).join("");
</script>
<script src="https://cdn.jsdelivr.net/npm/bootstrap@5.3.2/dist/js/bootstrap.bundle.min.js"></script>
</body>
</html>
